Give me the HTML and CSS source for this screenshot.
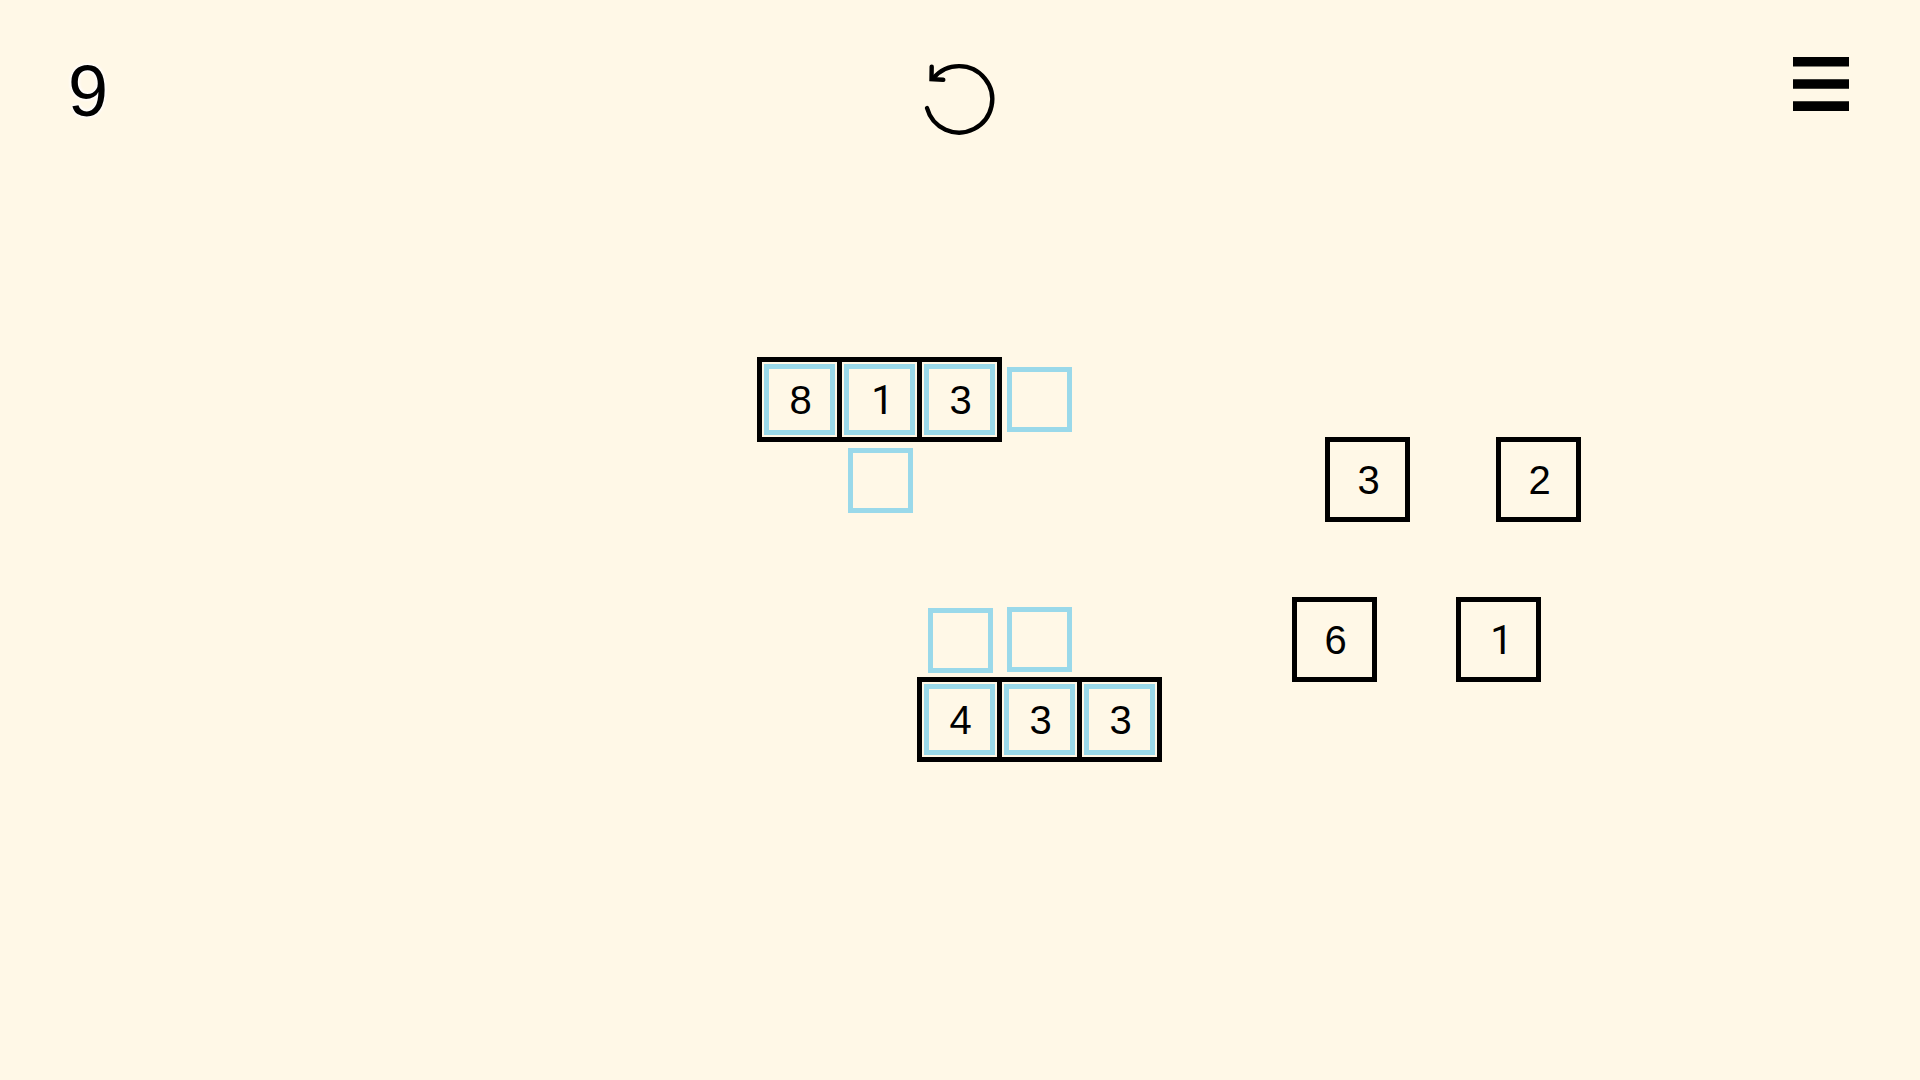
FILE: index.html
```html
<!DOCTYPE html>
<html lang="en">
<head>
<meta charset="utf-8">
<meta name="viewport" content="width=device-width, initial-scale=1">
<title>Level 9</title>
<link rel="stylesheet" href="styles.css">
</head>
<body>
<header class="topbar">
  <h1 class="level">9</h1>
  <button class="icon-button restart" type="button" aria-label="Restart">
    <svg width="80" height="80" viewBox="-1 0 80 80" fill="none" stroke="#000" stroke-width="4.4" stroke-linecap="round" stroke-linejoin="miter" aria-hidden="true">
      <path d="M7 48A33.2 33.2 0 1 0 13.4 18.2"/>
      <path d="M11.7 6.6L11.5 19.1L23.3 19.8"/>
    </svg>
  </button>
  <button class="icon-button menu" type="button" aria-label="Menu">
    <svg width="56" height="54" viewBox="0 0 56 54" aria-hidden="true">
      <path d="M0 0H56V9.5H0ZM0 22.2H56V31.7H0ZM0 44.3H56V54H0Z"/>
    </svg>
  </button>
</header>
<main class="table">
  <section class="board" aria-label="Board">
    <button class="tile placed r1 c1" type="button">8</button>
    <button class="tile tile-one placed r1 c2" type="button">1</button>
    <button class="tile placed r1 c3" type="button">3</button>
    <div class="slot r1 c4"></div>
    <div class="slot r2 c2"></div>
    <div class="slot r4 c3"></div>
    <div class="slot r4 c4"></div>
    <button class="tile placed r5 c3" type="button">4</button>
    <button class="tile placed r5 c4" type="button">3</button>
    <button class="tile placed r5 c5" type="button">3</button>
  </section>
  <section class="hand" aria-label="Loose tiles">
    <div class="hand-row hand-row-upper">
      <button class="tile" type="button">3</button>
      <button class="tile" type="button">2</button>
    </div>
    <div class="hand-row hand-row-lower">
      <button class="tile" type="button">6</button>
      <button class="tile tile-one" type="button">1</button>
    </div>
  </section>
</main>
</body>
</html>
```

FILE: styles.css
```css
* {
  box-sizing: border-box;
}

body {
  margin: 0;
  min-height: 100vh;
  background: #fff8e7;
  color: #000;
  font-family: "Liberation Sans", Arial, sans-serif;
}

button {
  margin: 0;
  padding: 0;
  border: 0;
  background: none;
  color: inherit;
  font: inherit;
  cursor: pointer;
}

svg {
  display: block;
}

.topbar {
  display: grid;
  grid-template-columns: 1fr auto 1fr;
  align-items: start;
  height: 360px;
  padding: 50px 71px 0 68px;
}

.level {
  margin: 0;
  font-size: 72px;
  line-height: 82px;
  font-weight: 400;
  text-shadow: 0 0 2px #fff, 0 0 3px #fff, 0 0 4px #fff, 0 0 4px #fff;
}

.restart {
  margin-top: 10px;
}

.menu {
  justify-self: end;
  margin-top: 7px;
}

/* The board stays centred; the loose tiles share the space to its right. */
.table {
  display: grid;
  grid-template-columns: 1fr 400px 1fr;
}

.board {
  grid-column: 2;
  display: grid;
  grid-template-columns: repeat(5, 80px);
  grid-template-rows: repeat(5, 80px);
}

.r1 { grid-row: 1; }
.r2 { grid-row: 2; }
.r4 { grid-row: 4; }
.r5 { grid-row: 5; }
.c1 { grid-column: 1; }
.c2 { grid-column: 2; }
.c3 { grid-column: 3; }
.c4 { grid-column: 4; }
.c5 { grid-column: 5; }

.tile {
  width: 85px;
  height: 85px;
  padding-left: 2px;
  border: 5px solid #000;
  font-size: 40px;
  line-height: 46px;
  text-align: center;
}

/* A plain one, without a foot. */
.tile-one {
  padding: 2px 0 0 6px;
  font-family: Roboto, "Liberation Sans", Arial, sans-serif;
}

/* Neighbouring tiles overlap by one border width. */
.placed {
  margin: -3px;
  outline: 5px solid #9ad9ea;
  outline-offset: -12px;
}

.slot {
  place-self: center;
  width: 65px;
  height: 65px;
  border: 5px solid #9ad9ea;
}

.c4.slot {
  place-self: start;
  margin: 7px;
}

.hand {
  display: flex;
  flex-direction: column;
  gap: 75px;
  padding: 77px 0 0 132px;
}

.hand-row {
  display: flex;
}

.hand-row-upper {
  gap: 86px;
  padding-left: 33px;
}

.hand-row-lower {
  gap: 79px;
}
```
